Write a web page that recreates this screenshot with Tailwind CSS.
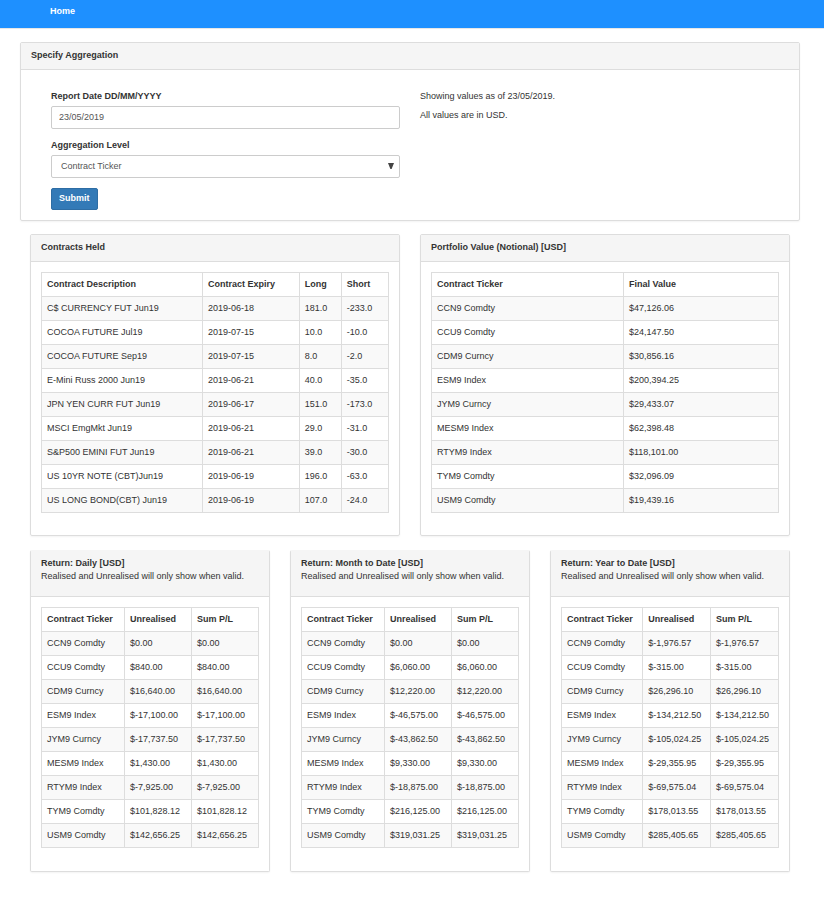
<!DOCTYPE html>
<html lang="en">
<head>
<meta charset="utf-8">
<meta name="viewport" content="width=device-width, initial-scale=1">
<title>Portfolio Report</title>
<script src="https://cdn.jsdelivr.net/npm/@tailwindcss/browser@4"></script>
</head>
<body class="bg-white font-['Liberation_Sans',Arial,sans-serif] text-[9px] leading-[13px] text-[#333]">
<nav class="border-b border-[#e7e7e7] bg-[#1e90ff] px-[50px] pt-[5px] pb-[10px]">
  <a href="#" class="block w-fit font-bold text-white">Home</a>
</nav>

<main class="pt-[13px] pr-6 pb-8 pl-5">
  <section class="mb-[13px] rounded-[2px] border border-[#ddd] shadow-xs">
    <h2 class="border-b border-[#ddd] bg-[#f5f5f5] px-[10px] pt-[6px] pb-[7px] font-bold">Specify Aggregation</h2>
    <div class="grid grid-cols-2 gap-5 px-[30px] pt-5 pb-[10px]">
      <form onsubmit="return false">
        <label for="date" class="mb-[3px] block font-bold">Report Date DD/MM/YYYY</label>
        <input id="date" type="text" value="23/05/2019" class="mb-[10px] block h-[23px] w-full rounded-[2px] border border-[#ccc] bg-white px-[7px] pb-[2px] text-[#555]">
        <label for="level" class="mb-[3px] block font-bold">Aggregation Level</label>
        <div class="relative mb-[10px]">
          <select id="level" class="block h-[23px] w-full appearance-none rounded-[2px] border border-[#ccc] bg-white px-[9px] text-[#555]">
            <option>Contract Ticker</option>
          </select>
          <svg class="pointer-events-none absolute top-2 right-[6px] h-[6px] w-[6px]" viewBox="0 0 6 6" aria-hidden="true"><path d="M0 0H6L3.6 6H2.4Z" fill="#444"/></svg>
        </div>
        <button type="submit" class="block h-[22px] rounded-[2px] border border-[#2e6da4] bg-[#337ab7] px-[7px] pb-[2px] font-bold text-white">Submit</button>
      </form>
      <div>
        <p class="mb-[6px]">Showing values as of 23/05/2019.</p>
        <p>All values are in USD.</p>
      </div>
    </div>
  </section>

  <div class="mb-[14px] grid grid-cols-2 gap-5 px-[10px]" id="holdings"></div>
  <div class="grid grid-cols-3 gap-5 px-[10px]" id="returns"></div>
</main>

<script>
const tickers = ["CCN9 Comdty", "CCU9 Comdty", "CDM9 Curncy", "ESM9 Index", "JYM9 Curncy", "MESM9 Index", "RTYM9 Index", "TYM9 Comdty", "USM9 Comdty"];

function table(cols, widths, rows) {
  const head = cols.map((c, i) => `<th scope="col" class="border border-[#ddd] px-[5px] py-[5px] text-left font-bold whitespace-nowrap" style="width:${widths[i]}%">${c}</th>`).join("");
  const body = rows.map(r => `<tr class="odd:bg-[#f9f9f9]">${r.map(c => `<td class="border border-[#ddd] px-[5px] py-[5px] whitespace-nowrap">${c}</td>`).join("")}</tr>`).join("");
  return `<table class="w-full table-fixed border-collapse"><thead><tr>${head}</tr></thead><tbody>${body}</tbody></table>`;
}

function panel(title, content) {
  return `<section class="rounded-[2px] border border-[#ddd] shadow-xs">
    <h2 class="border-b border-[#ddd] bg-[#f5f5f5] px-[10px] pt-[6px] pb-[7px] font-bold">${title}</h2>
    <div class="px-[10px] pt-[10px] pb-[22px]">${content}</div></section>`;
}

function returnPanel(title, widths, values) {
  const rows = tickers.map((t, i) => [t, "$" + values[i], "$" + values[i]]);
  return `<section class="rounded-[2px] border border-[#ddd] border-t-[#f5f5f5] shadow-xs">
    <header class="border-b border-[#ddd] bg-[#f5f5f5] px-[10px] pt-[6px] pb-[13px]">
      <h2 class="font-bold">${title}</h2>
      <p class="whitespace-nowrap">Realised and Unrealised will only show when valid.</p>
    </header>
    <div class="px-[10px] pt-[10px] pb-[23px]">${table(["Contract Ticker", "Unrealised", "Sum P/L"], widths, rows)}</div></section>`;
}

const contracts = [
  ["C$ CURRENCY FUT Jun19", "2019-06-18", "181.0", "-233.0"],
  ["COCOA FUTURE Jul19", "2019-07-15", "10.0", "-10.0"],
  ["COCOA FUTURE Sep19", "2019-07-15", "8.0", "-2.0"],
  ["E-Mini Russ 2000 Jun19", "2019-06-21", "40.0", "-35.0"],
  ["JPN YEN CURR FUT Jun19", "2019-06-17", "151.0", "-173.0"],
  ["MSCI EmgMkt Jun19", "2019-06-21", "29.0", "-31.0"],
  ["S&amp;P500 EMINI FUT Jun19", "2019-06-21", "39.0", "-30.0"],
  ["US 10YR NOTE (CBT)Jun19", "2019-06-19", "196.0", "-63.0"],
  ["US LONG BOND(CBT) Jun19", "2019-06-19", "107.0", "-24.0"]
];
const notional = ["47,126.06", "24,147.50", "30,856.16", "200,394.25", "29,433.07", "62,398.48", "118,101.00", "32,096.09", "19,439.16"];

document.getElementById("holdings").innerHTML =
  panel("Contracts Held", table(["Contract Description", "Contract Expiry", "Long", "Short"], [46.4, 27.9, 12.1, 13.6], contracts)) +
  panel("Portfolio Value (Notional) [USD]", table(["Contract Ticker", "Final Value"], [55.3, 44.7], tickers.map((t, i) => [t, "$" + notional[i]])));

document.getElementById("returns").innerHTML =
  returnPanel("Return: Daily [USD]", [38.2, 30.9, 30.9], ["0.00", "840.00", "16,640.00", "-17,100.00", "-17,737.50", "1,430.00", "-7,925.00", "101,828.12", "142,656.25"]) +
  returnPanel("Return: Month to Date [USD]", [38.2, 30.9, 30.9], ["0.00", "6,060.00", "12,220.00", "-46,575.00", "-43,862.50", "9,330.00", "-18,875.00", "216,125.00", "319,031.25"]) +
  returnPanel("Return: Year to Date [USD]", [37.4, 31.3, 31.3], ["-1,976.57", "-315.00", "26,296.10", "-134,212.50", "-105,024.25", "-29,355.95", "-69,575.04", "178,013.55", "285,405.65"]);
</script>
</body>
</html>
